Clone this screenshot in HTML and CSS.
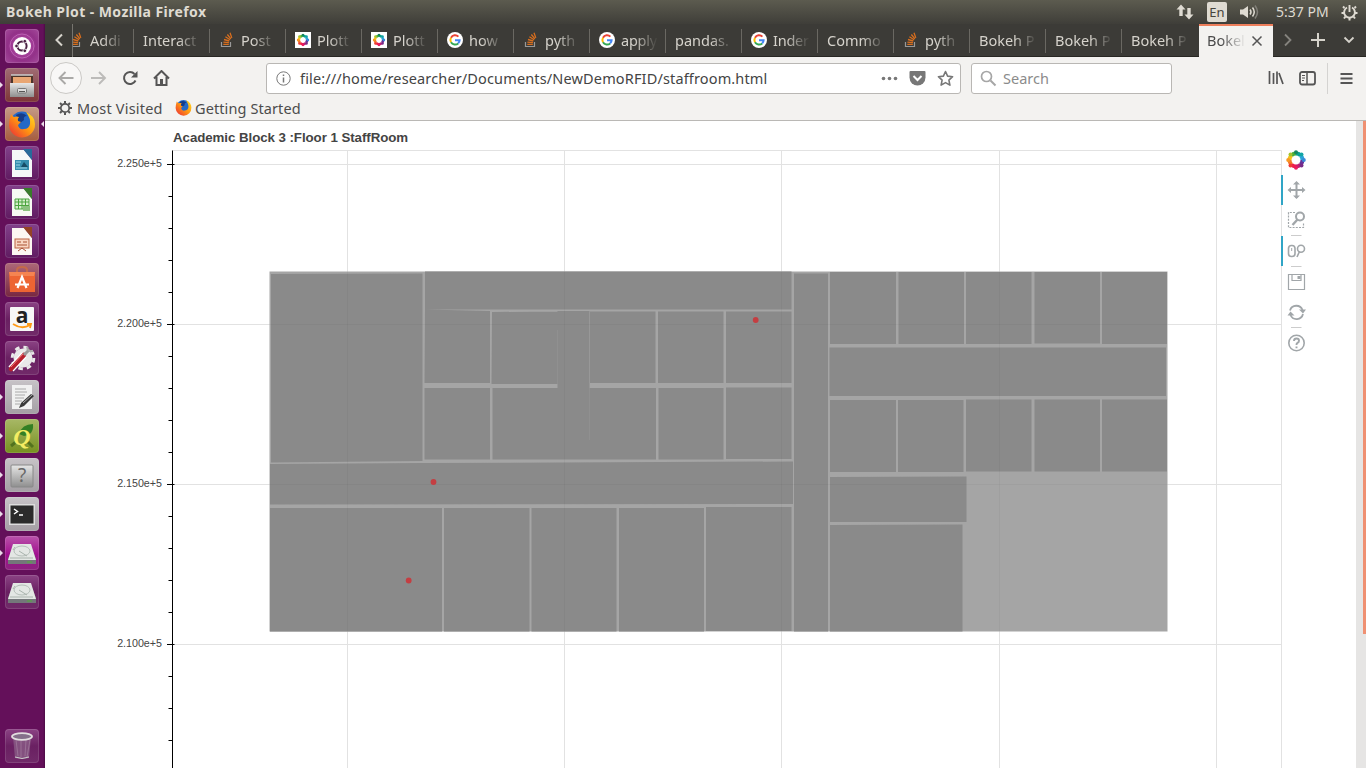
FILE: index.html
```
<!DOCTYPE html>
<html lang="en">
<head>
<meta charset="utf-8">
<title>Bokeh Plot</title>
<link rel="stylesheet" href="styles.css">
</head>
<body>
<svg width="0" height="0" class="defs">
  <defs>
    <linearGradient id="steel" x1="0" y1="0" x2="0" y2="1"><stop offset="0" stop-color="#e6e6e6"/><stop offset="1" stop-color="#8f8f8f"/></linearGradient>
    <linearGradient id="flame" x1="1" y1="0" x2="0" y2="1"><stop offset="0" stop-color="#ffe226"/><stop offset=".5" stop-color="#ff9412"/><stop offset="1" stop-color="#e9263c"/></linearGradient>
    <symbol id="so" viewBox="0 0 16 16"><path d="M2.500 10v4.500h9V10" fill="none" stroke="#999" stroke-width="1.200"/><path d="M4.300 12.400h5.500M4.400 10.100l5.500.6M5 7.500l5.300 1.500M6.400 4.800l4.700 2.900M8.400 2.500l3.500 4.300M11 .8l1.800 5.100" fill="none" stroke="#d96f1e" stroke-width="1.300"/></symbol>
    <symbol id="ring" viewBox="0 0 20 20">
      <g fill="none" stroke-width="4"><path d="M10 3.500a6.500 6.500 0 0 1 4.600 1.900" stroke="#0aa18f"/><path d="M14.600 5.400a6.500 6.500 0 0 1 1.900 4.600" stroke="#2ba5d9"/><path d="M16.500 10a6.500 6.500 0 0 1-1.900 4.600" stroke="#663399"/><path d="M14.600 14.600a6.500 6.500 0 0 1-4.600 1.900" stroke="#c21f72"/><path d="M10 16.500a6.500 6.500 0 0 1-4.600-1.900" stroke="#ee1c4e"/><path d="M5.400 14.600a6.500 6.500 0 0 1-1.900-4.600" stroke="#f37b2c"/><path d="M3.500 10a6.500 6.500 0 0 1 1.900-4.600" stroke="#f6c21c"/><path d="M5.400 5.400a6.500 6.500 0 0 1 4.600-1.900" stroke="#4aae3c"/></g>
      <g><circle cx="10" cy="2.200" r="2" fill="#16865e"/><circle cx="15.500" cy="4.500" r="2" fill="#12a5a5"/><circle cx="17.800" cy="10" r="2" fill="#3989d9"/><circle cx="15.500" cy="15.500" r="2" fill="#792b87"/><circle cx="10" cy="17.800" r="2" fill="#e91b5d"/><circle cx="4.500" cy="15.500" r="2" fill="#ee3d35"/><circle cx="2.200" cy="10" r="2" fill="#f79a25"/><circle cx="4.500" cy="4.500" r="2" fill="#a4c32d"/></g>
    </symbol>
    <symbol id="goog" viewBox="0 0 16 16"><circle cx="8" cy="8" r="8" fill="#fff"/><g fill="none" stroke-width="2"><path d="M4 5.700A4.700 4.700 0 0 1 11.400 4.600" stroke="#ea4335"/><path d="M4 5.700a4.700 4.700 0 0 0 0 4.600" stroke="#fbbc05"/><path d="M4 10.300a4.700 4.700 0 0 0 7.200 1.100" stroke="#34a853"/><path d="M11.200 11.400a4.700 4.700 0 0 0 1.400-3.200H8" stroke="#4285f4"/></g></symbol>
    <symbol id="fox" viewBox="0 0 28 28"><circle cx="14" cy="13" r="11.500" fill="#2469c7"/><path d="M8 5q6-4 11 1-4 0-3 4l-5 4z" fill="#143c89"/><path d="M3 4q1 2 3 3 3-1 5 0-2 2-1 4l3 1-3 3q1 5 6 4 5 0 6-5 1-5-4-12 9 4 9 12a13 13 0 0 1-26 1Q1 10 3 4z" fill="url(#flame)"/></symbol>
    <symbol id="disk" viewBox="0 0 34 34"><path d="M8 10h18l5 13v5H3v-5z" fill="#74777a"/><path d="M8 8h18l5 16H3z" fill="#e3e7e4"/><ellipse cx="17" cy="15" rx="8" ry="5" fill="none" stroke="#b4beb8"/><path d="M5 22h23M14 15l8 5M10 11l-2 3" stroke="#a9b3ad"/><path d="M22 26h5" stroke="#5e9d50" stroke-width="1.500"/></symbol>
  </defs>
</svg>
<div class="desktop">
  <header class="panel">
    <span class="title">Bokeh Plot - Mozilla Firefox</span>
    <div class="tray">
      <svg width="18" height="16" viewBox="0 0 18 16"><path d="M5 .500L.5 5.500H3.300V12H6.700V5.500H9.500zM13 15.500l4.500-5H14.700V4H11.300V10.500H8.500z" fill="#dfdbd2"/></svg>
      <span class="lang">En</span>
      <svg width="20" height="16" viewBox="0 0 20 16"><path d="M0 5.500h3L8 2v12l-5-3.500H0z" fill="#dfdbd2"/><path d="M10 5.500q2 2.500 0 5M12.500 3.500q3.500 4.500 0 9" fill="none" stroke="#dfdbd2" stroke-width="1.500"/><path d="M15 1.500q5 6.500 0 13" fill="none" stroke="#817f78" stroke-width="1.500"/></svg>
      <span class="clock">5:37 PM</span>
      <svg width="17" height="17" viewBox="0 0 17 17" fill="none" stroke="#dfdbd2"><path d="M6 3.500A5.400 5.400 0 1 0 11 3.500" stroke-width="1.900"/><path d="M8.500 1v7" stroke-width="1.900"/><path d="M3.500 4L2 2.500M13.500 4L15 2.500M3 9H.5M14 9h2.500M4.500 12.500L3 14.500M12.500 12.500l1.500 2M8.500 14v2.500" stroke-width="2"/></svg>
    </div>
  </header>
  <main class="below">
    <nav class="launcher">
      <div class="apps">
        <div class="tile dash"><svg viewBox="0 0 34 34"><circle cx="17" cy="17" r="12" fill="none" stroke="#d27bca" opacity=".6"/><circle cx="17" cy="17" r="9" fill="#fff"/><circle cx="17" cy="17" r="4.600" fill="none" stroke="#4a2044" stroke-width="2"/><g fill="#4a2044" stroke="#fff" stroke-width=".8"><circle cx="11.500" cy="17" r="1.800"/><circle cx="19.800" cy="12.200" r="1.800"/><circle cx="19.800" cy="21.800" r="1.800"/></g></svg></div>
        <div class="tile files run"><svg viewBox="0 0 34 34"><path d="M6 7h22v9H6z" fill="#4c352b"/><path d="M8 9h18v7H8z" fill="#e9a673"/><path d="M6 7h22" stroke="#ccc" stroke-width="1.500"/><path d="M5 15h24v14H5z" fill="url(#steel)"/><rect x="12.500" y="20.500" width="9" height="4.500" rx="1" fill="#ddd" stroke="#777"/><path d="M14 23.500h6" stroke="#555"/></svg></div>
        <div class="tile foxy run active"><svg viewBox="0 0 34 34"><use href="#fox" x="3" y="3" width="28" height="28"/></svg></div>
        <div class="tile doc"><svg viewBox="0 0 34 34"><path d="M7 4h12l8 10v17H7z" fill="#f4f8f8"/><path d="M18 3h9v11z" fill="#276b9a"/><rect x="10" y="14" width="14" height="10" fill="#358eae"/><path d="M11 16h5M11 19h4M11 22h11" stroke="#9ed8e7"/><path d="M16 21l3-5 4 5z" fill="#174d66"/></svg></div>
        <div class="tile doc"><svg viewBox="0 0 34 34"><path d="M7 4h12l8 10v17H7z" fill="#f6faf3"/><path d="M18 3h9v11z" fill="#397c2c"/><path d="M10 14h14v10H10zM10 17h14M10 20.500h14M13.500 14v10M17 14v10M20.500 14v10" fill="#d6efcc" stroke="#4ba43e"/><path d="M18 21h7v5h-7z" fill="#8bc27f"/></svg></div>
        <div class="tile doc"><svg viewBox="0 0 34 34"><path d="M7 4h12l8 10v17H7z" fill="#fcf7f2"/><path d="M18 3h9v11z" fill="#944326"/><rect x="10" y="15" width="14" height="9" fill="#f8d6c2" stroke="#bb6444"/><path d="M12 18h4M12 21h10M18 18h4M13 27l4-3 4 3" fill="none" stroke="#a95032"/></svg></div>
        <div class="tile soft"><svg viewBox="0 0 34 34"><path d="M12 10V7q0-3 5-3t5 3v3" fill="none" stroke="#c56a49" stroke-width="2"/><path d="M4 9h26v20H5z" fill="#ed6533"/><path d="M4 9h26l-1 4H5z" fill="#f58451"/><path d="M12.500 25L17 14l4.500 11M10 21.500h14" fill="none" stroke="#fff" stroke-width="2.200"/></svg></div>
        <div class="tile amz"><svg viewBox="0 0 34 34"><rect x="5" y="5" width="24" height="24" rx="1" fill="#f7f7f7"/><text x="17" y="21" text-anchor="middle" class="a">a</text><path d="M8 22q9 6 17 1M22 22l4 0-1 4" fill="none" stroke="#ff9a16" stroke-width="1.800"/></svg></div>
        <div class="tile sett"><svg viewBox="0 0 34 34"><circle cx="18" cy="17" r="9.500" fill="#e9e9e9"/><circle cx="18" cy="17" r="10.800" fill="none" stroke="#e9e9e9" stroke-width="3" stroke-dasharray="4.500 4"/><path d="M6 28L19 14" stroke="#fff" stroke-width="7"/><path d="M6 28L19 14" stroke="#b71f2c" stroke-width="4.500" stroke-linecap="round"/><path d="M6 26L18 13" stroke="#ef7476"/><path d="M19 14l5-5" stroke="#999" stroke-width="3"/><path d="M22 6q1 5 6 4" fill="none" stroke="#aaa" stroke-width="2"/></svg></div>
        <div class="tile gray run"><svg viewBox="0 0 34 34"><rect x="7" y="5" width="20" height="24" fill="#f1f1f1"/><path d="M10 9h11M10 12h12M10 15h10M10 18h9M10 21h7M10 24h5" stroke="#aaa"/><path d="M14 28l2-5 10-9 3 2-10 10z" fill="#393939"/><path d="M18 23l9-8" stroke="#aaa"/></svg></div>
        <div class="tile qgis run"><svg viewBox="0 0 34 34"><path d="M14 15Q17 5 28 5q1 11-9 12z" fill="#347f24"/><path d="M6 27l6-5M22 22l6 6" stroke="#52721e" stroke-width="3"/><text x="17" y="26" text-anchor="middle" class="q">Q</text></svg></div>
        <div class="tile gray run"><svg viewBox="0 0 34 34"><rect x="6" y="7" width="22" height="22" rx="1" fill="url(#steel)" stroke="#888"/><text x="17" y="24" text-anchor="middle" class="h">?</text></svg></div>
        <div class="tile gray run"><svg viewBox="0 0 34 34"><rect x="4" y="7" width="26" height="21" fill="#ddd"/><rect x="5.500" y="8.500" width="23" height="18" fill="#2b2b2b"/><path d="M9 12l3.500 2.500L9 17M14 18h4" fill="none" stroke="#fff" stroke-width="1.500"/></svg></div>
        <div class="tile mount run"><svg viewBox="0 0 34 34"><use href="#disk"/></svg></div>
        <div class="tile"><svg viewBox="0 0 34 34"><use href="#disk"/></svg></div>
      </div>
      <div class="tile"><svg viewBox="0 0 34 34"><path d="M8 8h18l-2 21q-7 2-14 0z" fill="#8d648a" opacity=".7"/><path d="M11 11l2 16M16 11v17M21 11l-1 16M25 11l-3 17" stroke="#cbb7c8" opacity=".3"/><ellipse cx="17" cy="7.500" rx="10" ry="3.300" fill="#85708a" stroke="#e2dedf" stroke-width="1.800"/><path d="M10 28q7 3 14 0" fill="none" stroke="#ccc"/></svg></div>
    </nav>
    <section class="browser">
      <div class="tabs">
        <div class="scroll"><svg width="10" height="14" viewBox="0 0 10 14"><path d="M8 1.500L2.500 7 8 12.500" fill="none" stroke="#d6d3cc" stroke-width="2"/></svg></div>
        <div class="tab first"><svg class="fav"><use href="#so"/></svg><span>Addi</span></div>
        <div class="tab"><span class="wide">Interact</span></div>
        <div class="tab"><svg class="fav"><use href="#so"/></svg><span>Post</span></div>
        <div class="tab"><svg class="fav white" viewBox="-2.500 -2.500 25 25"><use href="#ring" width="20" height="20"/></svg><span>Plott</span></div>
        <div class="tab"><svg class="fav white" viewBox="-2.500 -2.500 25 25"><use href="#ring" width="20" height="20"/></svg><span>Plott</span></div>
        <div class="tab"><svg class="fav"><use href="#goog"/></svg><span>how</span></div>
        <div class="tab"><svg class="fav"><use href="#so"/></svg><span>pyth</span></div>
        <div class="tab"><svg class="fav"><use href="#goog"/></svg><span class="tight">apply</span></div>
        <div class="tab"><span class="wide">pandas.</span></div>
        <div class="tab"><svg class="fav"><use href="#goog"/></svg><span class="tight">Inder</span></div>
        <div class="tab"><span class="wide">Commo</span></div>
        <div class="tab"><svg class="fav"><use href="#so"/></svg><span>pyth</span></div>
        <div class="tab"><span class="wide">Bokeh P</span></div>
        <div class="tab"><span class="wide">Bokeh P</span></div>
        <div class="tab last"><span class="wide">Bokeh P</span></div>
        <div class="tab current"><span>Bokel</span><svg width="12" height="12" viewBox="0 0 12 12"><path d="M1.500 1.500l9 9M10.500 1.500l-9 9" stroke="#555" stroke-width="1.500"/></svg></div>
        <div class="ends">
          <svg width="10" height="14" viewBox="0 0 10 14"><path d="M2 1.500L7.500 7 2 12.500" fill="none" stroke="#85837e" stroke-width="1.800"/></svg>
          <svg width="16" height="16" viewBox="0 0 16 16"><path d="M8 1v14M1 8h14" stroke="#d6d3cc" stroke-width="2"/></svg>
          <svg width="12" height="8" viewBox="0 0 12 8"><path d="M1.500 1.500L6 6l4.500-4.500" fill="none" stroke="#d6d3cc" stroke-width="1.800"/></svg>
        </div>
      </div>
      <div class="toolbar">
        <div class="navs">
          <span class="back"><svg width="16" height="16" viewBox="0 0 16 16"><path d="M15.500 8H1.500M7.500 2L1.500 8l6 6" fill="none" stroke="#aaa9a7" stroke-width="1.900"/></svg></span>
          <svg class="fwd" width="17" height="16" viewBox="0 0 17 16"><path d="M1 8h14M9 2l6 6-6 6" fill="none" stroke="#bcbbb9" stroke-width="1.900"/></svg>
          <svg class="reload" width="16" height="16" viewBox="0 0 16 16"><path d="M13.500 10.500A6 6 0 1 1 12.500 4" fill="none" stroke="#555" stroke-width="2"/><path d="M15.500 1v6.500H9z" fill="#555"/></svg>
          <svg width="17" height="16" viewBox="0 0 17 16"><path d="M1 8.500L8.500 1 16 8.500M3.500 7v8h10V7" fill="none" stroke="#555" stroke-width="2"/><path d="M7 9h3v6H7z" fill="#555"/></svg>
        </div>
        <div class="url">
          <svg width="15" height="15" viewBox="0 0 15 15"><circle cx="7.500" cy="7.500" r="6.700" fill="none" stroke="#777"/><path d="M7.500 6.500v5M7.500 3.500v1.600" stroke="#777" stroke-width="1.500"/></svg>
          <span class="addr">file:///home/researcher/Documents/NewDemoRFID/staffroom.html</span>
          <svg class="dots" width="17" height="5" viewBox="0 0 17 5" fill="#777"><circle cx="2.500" cy="2.500" r="1.800"/><circle cx="8.500" cy="2.500" r="1.800"/><circle cx="14.500" cy="2.500" r="1.800"/></svg>
          <svg class="pocket" width="17" height="15" viewBox="0 0 17 15"><path d="M1.500 0h14Q16.500 0 16.500 1v5.500a8 8 0 0 1-16 0V1Q.5 0 1.500 0z" fill="#777"/><path d="M4.500 5l4 4 4-4" fill="none" stroke="#fff" stroke-width="2"/></svg>
          <svg width="17" height="17" viewBox="0 0 17 17"><path d="M8.500 1.500l2.100 4.600 5 .6-3.700 3.400 1 5-4.400-2.500-4.400 2.500 1-5L1.400 6.700l5-.6z" fill="none" stroke="#777" stroke-width="1.600" stroke-linejoin="round"/></svg>
        </div>
        <div class="search"><svg width="17" height="17" viewBox="0 0 17 17"><circle cx="6.500" cy="6.500" r="5" fill="none" stroke="#a6a6a6" stroke-width="1.700"/><path d="M10.500 10.500l5 5" stroke="#a6a6a6" stroke-width="2"/></svg><span>Search</span></div>
        <div class="right">
          <svg width="16" height="16" viewBox="0 0 16 16"><path d="M1.500 1v13M5.500 3v11M9 1.500v12.500M11 3l4 11" stroke="#555" stroke-width="1.700"/></svg>
          <svg width="17" height="15" viewBox="0 0 17 15"><rect x="1" y="1" width="15" height="12.500" rx="2" fill="none" stroke="#555" stroke-width="1.800"/><path d="M8 1v12.500" stroke="#555" stroke-width="1.500"/><path d="M3 4.500h3M3 7h3M3 9.500h2" stroke="#555"/></svg>
          <i class="div"></i>
          <svg width="13" height="13" viewBox="0 0 13 13"><path d="M.5 2h12M.5 6.500h12M.5 11h12" stroke="#555" stroke-width="1.800"/></svg>
        </div>
      </div>
      <div class="bookmarks">
        <svg width="14" height="14" viewBox="0 0 14 14" fill="none" stroke="#555"><circle cx="7" cy="7" r="4.200" stroke-width="1.700"/><path d="M7 0v2.500M7 11.500V14M0 7h2.500M11.500 7H14M2 2l1.700 1.700M10.300 10.300L12 12M12 2l-1.700 1.700M2 12l1.700-1.700" stroke-width="2"/></svg>
        <span class="mv">Most Visited</span>
        <svg width="17" height="17"><use href="#fox"/></svg>
        <span class="gs">Getting Started</span>
      </div>
      <div class="page">
        <svg class="plot" width="1311" height="647" viewBox="45 121 1311 647">
          <g class="grid"><path d="M347.500 151V768M564.500 151V768M781.500 151V768M999.500 151V768M1216.500 151V768M173 164.500H1281M173 324.500H1281M173 484.500H1281M173 644.500H1281"/><path d="M172 150.500H1281.500V768"/></g>
          <path class="floor" d="M269.500 271.500H1167.500V631.500H269.500z"/>
          <path class="room" d="M271 274L422.500 273.500V461L271 462.500zM425 271.500H791.500V309.500H425zM425 309.500L490 311V383H424.500zM492 312L557.500 311.500V384H491.500zM557.500 311H589.500V459.500H557.500zM590 311.500H655.500V383H590zM658 311.500H723.500V383H658zM726 311.500H791.500V383H726zM424.500 388H490V459.500H424.500zM492.500 388H558V459.500H492.500zM589.500 388H656V459.500H589.500zM658.500 388H723.500V459.500H658.500zM726 387.500H791.500V459H726zM270 464L422 463 793 461.500V504L270 504.500zM270 508H442V631.500H270zM444 508H529.500V631.500H444zM531.500 508H616.500V631.500H531.500zM619 508H704V631.500H619zM706 507H791.500V631H706zM794 273.500H828V631.500H794z"/>
          <path class="room" d="M830 272H896V344H830zM898.500 272H964V344H898.500zM966 272H1031.500V344H966zM1034.500 272H1100V343.500H1034.500zM1102 272H1167V344H1102zM829.500 347.500H1166V396H829.500zM830 400H896V472H830zM898 400H963.500V472H898zM966 399.500H1031.500V471.500H966zM1034.500 399.500H1100V471.500H1034.500zM1102 399.500H1167V471.500H1102zM830 477L966.500 476.500V522H830zM830 525L962.500 524.500V631.500H830z"/>
          <path class="seam" d="M557.500 330V384M589.500 388V440"/>
          <path class="under" d="M347.500 272V631M564.500 272V631M781.500 272V631M999.500 272V631M270 324.500H1167M270 484.500H1167"/>
          <g class="mark"><circle cx="755.700" cy="320" r="2.900"/><circle cx="433.500" cy="482" r="2.900"/><circle cx="408.700" cy="580.500" r="2.900"/></g>
          <path class="axis" d="M172.500 150.500V768M167 164.500H174.500M167 324.500H174.500M167 484.500H174.500M167 644.500H174.500M168.500 196.500H172M168.500 228.500H172M168.500 260.500H172M168.500 292.500H172M168.500 356.500H172M168.500 388.500H172M168.500 420.500H172M168.500 452.500H172M168.500 516.500H172M168.500 548.500H172M168.500 580.500H172M168.500 612.500H172M168.500 676.500H172M168.500 708.500H172M168.500 740.500H172"/>
          <g class="ticks"><text x="162" y="167">2.250e+5</text><text x="162" y="327">2.200e+5</text><text x="162" y="487">2.150e+5</text><text x="162" y="647">2.100e+5</text></g>
          <text class="ptitle" x="173" y="142">Academic Block 3 :Floor 1 StaffRoom</text>
          <path d="M1282 175V205M1282 236V266" stroke="#30a5c6" stroke-width="2"/>
          <use href="#ring" x="1286" y="150" width="20" height="20"/>
          <g fill="none" stroke="#a1a6a9" stroke-width="1.600">
            <path d="M1289 190H1304M1296.500 183V198" stroke-width="2"/><path d="M1296.500 181l3.500 3.500h-7zM1296.500 199l3.500-3.500h-7zM1287.500 190l3.500-3v6zM1305.500 190l-3.500-3v6z" fill="#a1a6a9" stroke="none"/>
            <path d="M1295 212.500H1288.500V227.500H1303.500V223" stroke-dasharray="2 1.200" stroke-width="1.200"/><circle cx="1300" cy="216.500" r="4" stroke-width="2"/><path d="M1297.500 219.500l-5 5.500" stroke-width="2.400"/>
            <rect x="1288.500" y="245.500" width="6.500" height="11" rx="3"/><path d="M1291.700 248v3" stroke-width="1"/><circle cx="1301" cy="248.700" r="3.500"/><path d="M1299.500 251.500L1297 257"/>
            <path d="M1288.500 274.500H1304.500V289.500H1288.500zM1292 275V280.500H1301V275" stroke-width="1.200"/><path d="M1297.500 276h3v3h-3z" fill="#a1a6a9" stroke="none"/>
            <path d="M1290 310.500A6.600 6.600 0 0 1 1302.500 310M1303 314A6.600 6.600 0 0 1 1290.500 315" stroke-width="1.800"/><path d="M1299 309.500h7l-3 4zM1287.500 315.500h7l-4-4z" fill="#a1a6a9" stroke="none"/>
            <circle cx="1296.500" cy="343" r="7.700"/><path d="M1294 341q0-2.500 2.500-2.500t2.500 2.200q0 1.600-1.800 2.400-.7.400-.7 1.900M1296.500 346.500v1.800" stroke-width="1.900"/>
            <path d="M1291 235.500H1301.500M1291 266.500H1301.500M1291 327.500H1301.500" stroke="#ccc" stroke-width="1"/>
          </g>
        </svg>
        <div class="bar"><i></i></div>
      </div>
    </section>
  </main>
</div>
</body>
</html>
```
FILE: styles.css
```
* { box-sizing: border-box; }
body { margin: 0; overflow: hidden; font-family: "Noto Sans", "Open Sans", sans-serif; }
svg { display: block; flex: none; }
.defs { position: absolute; }
.desktop { width: 1366px; height: 768px; display: flex; flex-direction: column; overflow: hidden; background: #fff; }
.panel { height: 24px; flex: none; display: flex; align-items: center; justify-content: space-between; padding: 0 8px 0 6px; background: linear-gradient(#5c5b4f, #3f3e39); color: #dfdbd2; }
.title { font-size: 14px; line-height: 16px; padding-bottom: 1px; font-weight: 700; letter-spacing: .42px; white-space: nowrap; }
.tray { display: flex; align-items: center; font-size: 14px; }
.lang { width: 20px; height: 20px; margin: 0 13px; border-radius: 2px; background: #dfdbd2; color: #45443d; text-align: center; line-height: 20px; font-size: 13px; }
.clock { margin: 0 11px 0 16px; width: 54px; white-space: nowrap; line-height: 16px; padding-bottom: 1px; }
.below { flex: 1; display: flex; min-height: 0; }
.launcher { width: 45px; flex: none; display: flex; flex-direction: column; justify-content: space-between; padding: 5px 0 5px 5px; background: linear-gradient(90deg, #64105a 43px, #4c0b45); }
.apps { display: flex; flex-direction: column; gap: 5px; }
.tile { width: 34px; height: 34px; border-radius: 4px; position: relative; background: linear-gradient(#8b4384, #6a2062 50%, #712a69); box-shadow: inset 0 0 0 1px rgba(255,255,255,.12); }
.tile svg { width: 34px; height: 34px; }
.dash { background: radial-gradient(#c157b5, #923188 60%, #a54b9c); }
.files { background: linear-gradient(#a06c74, #7d3537); }
.foxy { background: linear-gradient(#c59a87, #a55c3e); }
.doc { background: linear-gradient(#82408a, #601b61); }
.soft { background: linear-gradient(#ad6878, #772741); }
.gray { background: linear-gradient(#c7c3c7, #a49fa4); }
.qgis { background: linear-gradient(#a8b866, #769020); }
.mount { background: linear-gradient(#b953aa, #a10f8f 55%, #8c237e); }
.run::before, .active::after { content: ""; position: absolute; top: 14px; left: -5px; border: solid transparent; border-width: 3px 0 3px 3px; border-left-color: #eadbe8; }
.active::after { left: 36px; border-width: 3px 3px 3px 0; border-right-color: #eadbe8; }
.a { font: 700 21px "Open Sans", sans-serif; fill: #222; }
.q { font: italic 700 24px "Liberation Serif", serif; fill: #f4ed63; }
.h { font: 19px "Noto Sans", sans-serif; fill: #686868; }
.browser { flex: 1; min-width: 0; display: flex; flex-direction: column; background: #f3f2f0; }
.tabs { height: 33px; flex: none; display: flex; background: #3c3b37; box-shadow: inset 0 -1px #282723; color: #d6d3cc; font-size: 14.500px; }
.scroll { width: 28px; display: flex; align-items: center; padding: 0 0 2px 9px; border-right: 1px solid #77756f; }
.tab { width: 76px; flex: none; display: flex; align-items: center; padding: 0 0 1px 9px; gap: 6px; overflow: hidden; background: linear-gradient(#6a6862, #6a6862) right 5px / 1px 24px no-repeat; white-space: nowrap; }
.tab span { width: 35px; overflow: hidden; padding-bottom: 1px; -webkit-mask-image: linear-gradient(90deg, #000 35%, transparent); mask-image: linear-gradient(90deg, #000 35%, transparent); }
.tab .tight { width: 37px; letter-spacing: -.25px; }
.tab .wide { width: 58px; -webkit-mask-image: linear-gradient(90deg, #000 60%, transparent); mask-image: linear-gradient(90deg, #000 60%, transparent); }
.first { width: 61px; padding-left: 0; }
.first .fav { margin-left: -5px; }
.fav { width: 16px; height: 16px; }
.white { background: #fff; }
.last { width: 77px; background: none; }
.current { width: 74px; padding: 0 0 2px 8px; gap: 5px; background: #f3f2f0; border-top: 2px solid #ee7f5c; color: #4a4a4a; }
.current span { width: 39px; padding-bottom: 2px; }
.ends { flex: 1; display: flex; align-items: center; justify-content: space-between; padding: 0 11px 1px 10px; }
.toolbar { height: 42px; flex: none; display: flex; align-items: center; }
.navs { width: 221px; display: flex; align-items: center; padding-left: 5px; }
.back { width: 32px; height: 32px; border: 1px solid #cbc9c6; border-radius: 50%; display: grid; place-items: center; background: #f8f7f6; }
.fwd { margin: 0 15px 0 8px; }
.reload { margin-right: 15px; }
.url { width: 695px; height: 31px; display: flex; align-items: center; padding: 0 6px 0 9px; border: 1px solid #b9b7b4; border-radius: 3px; background: #fff; }
.addr { margin-left: 9px; flex: 1; font-size: 14.500px; letter-spacing: .145px; color: #444; white-space: nowrap; }
.dots { margin-right: 11px; }
.pocket { margin-right: 11px; }
.search { width: 201px; height: 31px; margin-left: 10px; display: flex; align-items: center; gap: 6px; padding-left: 8px; border: 1px solid #b9b7b4; border-radius: 3px; background: #fff; color: #8b8b8b; font-size: 14.500px; }
.right { flex: 1; display: flex; align-items: center; justify-content: flex-end; padding-right: 13px; }
.right svg:nth-child(2) { margin-left: 15px; }
.div { width: 1px; height: 31px; margin: 0 12px 0 11px; background: #d4d3d1; }
.bookmarks { height: 22px; flex: none; display: flex; align-items: center; padding: 0 0 4px 13px; border-bottom: 1px solid #bab8b5; color: #4c4c4c; font-size: 14.500px; line-height: 18px; white-space: nowrap; }
.mv { margin-left: 5px; width: 98px; letter-spacing: .2px; }
.gs { margin-left: 3px; letter-spacing: .1px; }
.page { flex: 1; min-height: 0; display: flex; background: #fff; }
.bar { flex: 1; background: #e6e5e4; display: flex; justify-content: flex-end; }
.bar i { width: 3px; height: 513px; background: #ef9072; }
.grid { fill: none; stroke: #e2e2e2; }
.floor { fill: #a5a5a5; }
.room { fill: #8a8a8a; }
.seam { fill: none; stroke: #969696; stroke-width: .5; }
.under { fill: none; stroke: #000; stroke-opacity: .03; }
.mark { fill: #c43e42; }
.axis { fill: none; stroke: #000; }
.ticks { font: 10.700px "Liberation Sans", Arial, sans-serif; fill: #444; text-anchor: end; }
.ptitle { font: 700 13.300px "Liberation Sans", Arial, sans-serif; letter-spacing: -.06px; fill: #444; }
```
